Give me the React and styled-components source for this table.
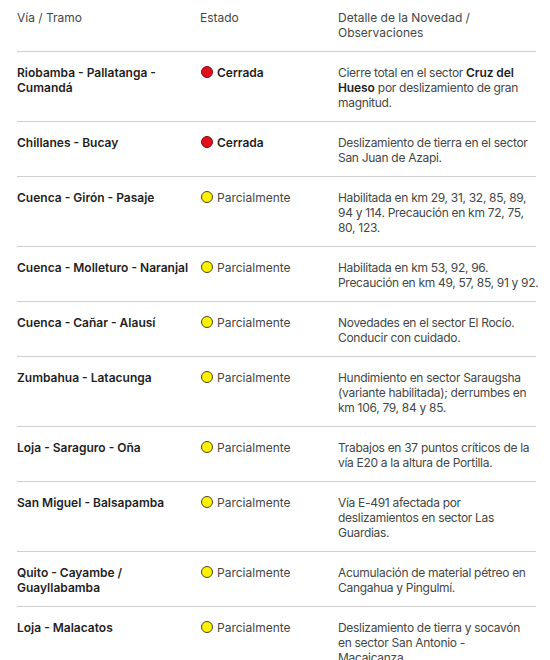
import React from "react";
import styled, { createGlobalStyle } from "styled-components";

const GlobalStyle = createGlobalStyle`
  body {
    margin: 0;
    background: #ffffff;
    font-family: Inter, "Noto Sans", Roboto, sans-serif;
    -webkit-font-smoothing: antialiased;
  }
`;

const Table = styled.div`
  margin: 0 14px 0 17px;
  width: 519px;
`;

const Row = styled.div`
  display: grid;
  grid-template-columns: 183px 138px 198px;
  padding: ${(p) => (p.$head ? "10px 0 11px" : "13px 0 11px")};
  border-bottom: 1px solid #cfcfcf;
  font-size: 12px;
  line-height: 15px;
  color: #444746;
`;

const Via = styled.div`
  font-weight: 600;
  color: #1f1f1f;
  padding-right: 6px;
`;

const Estado = styled.div`
  display: flex;
  align-items: flex-start;
  gap: 4px;
  font-weight: ${(p) => (p.$closed ? 600 : 400)};
  color: ${(p) => (p.$closed ? "#1f1f1f" : "#444746")};
`;

const Dot = styled.span`
  flex: none;
  width: 12px;
  height: 12px;
  margin: 1px 0 0 1px;
  border-radius: 50%;
  box-sizing: border-box;
  border: 1px solid ${(p) => (p.$closed ? "#7a0a10" : "#4a4520")};
  background: ${(p) => (p.$closed ? "#e3101c" : "#fff200")};
`;

const Detalle = styled.div`
  margin-right: -4px;
  letter-spacing: ${(p) => (p.$head ? "0" : "-0.3px")};
  b {
    font-weight: 600;
    color: #1f1f1f;
    letter-spacing: -0.1px;
  }
`;

const rows = [
  {
    via: "Riobamba - Pallatanga - Cumandá",
    closed: true,
    det: (
      <>
        Cierre total en el sector <b>Cruz del Hueso</b> por deslizamiento de gran magnitud.
      </>
    ),
  },
  { via: "Chillanes - Bucay", closed: true, det: "Deslizamiento de tierra en el sector San Juan de Azapi." },
  {
    via: "Cuenca - Girón - Pasaje",
    det: "Habilitada en km 29, 31, 32, 85, 89, 94 y 114. Precaución en km 72, 75, 80, 123.",
  },
  {
    via: "Cuenca - Molleturo - Naranjal",
    det: "Habilitada en km 53, 92, 96. Precaución en km 49, 57, 85, 91 y 92.",
  },
  { via: "Cuenca - Cañar - Alausí", det: "Novedades en el sector El Rocío. Conducir con cuidado." },
  {
    via: "Zumbahua - Latacunga",
    det: "Hundimiento en sector Saraugsha (variante habilitada); derrumbes en km 106, 79, 84 y 85.",
  },
  { via: "Loja - Saraguro - Oña", det: "Trabajos en 37 puntos críticos de la vía E20 a la altura de Portilla." },
  {
    via: "San Miguel - Balsapamba",
    det: "Vía E-491 afectada por deslizamientos en sector Las Guardias.",
  },
  { via: "Quito - Cayambe / Guayllabamba", det: "Acumulación de material pétreo en Cangahua y Pingulmí." },
  {
    via: "Loja - Malacatos",
    det: (
      <>
        Deslizamiento de tierra y socavón en{"\u00a0"}sector San Antonio -<br />
        Macaicanza.
      </>
    ),
  },
];

export default function App() {
  return (
    <>
      <GlobalStyle />
      <Table>
        <Row $head>
          <div>Vía / Tramo</div>
          <div>Estado</div>
          <Detalle $head>Detalle de la Novedad / Observaciones</Detalle>
        </Row>
        {rows.map((r) => (
          <Row key={r.via}>
            <Via>{r.via}</Via>
            <Estado $closed={r.closed}>
              <Dot $closed={r.closed} />
              {r.closed ? "Cerrada" : "Parcialmente"}
            </Estado>
            <Detalle>{r.det}</Detalle>
          </Row>
        ))}
      </Table>
    </>
  );
}
